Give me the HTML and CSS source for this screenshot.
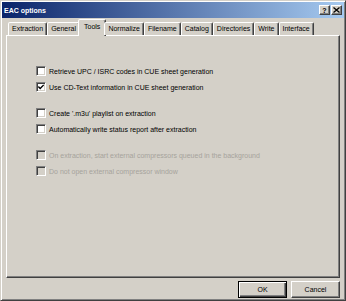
FILE: index.html
```html
<!DOCTYPE html>
<html lang="en">
<head>
    <meta charset="UTF-8">
    <title>EAC options</title>
    <link rel="stylesheet" href="styles.css">
</head>
<body>
  <div class="window">
    <div class="titlebar">
      <span class="title">EAC options</span>
      <div class="caption-buttons">
        <span class="cap-btn">?</span>
        <span class="cap-btn">
          <svg width="7" height="6" viewBox="0 0 7 6"><path d="M0.5 0.5 L6.5 5.5 M6.5 0.5 L0.5 5.5" stroke="#000" stroke-width="1.3"/></svg>
        </span>
      </div>
    </div>

    <div class="tabs">
      <div class="tab">Extraction</div>
      <div class="tab">General</div>
      <div class="tab active">Tools</div>
      <div class="tab">Normalize</div>
      <div class="tab">Filename</div>
      <div class="tab">Catalog</div>
      <div class="tab">Directories</div>
      <div class="tab">Write</div>
      <div class="tab">Interface</div>
    </div>

    <div class="panel">
      <div class="group">
        <label class="check"><span class="box"></span>Retrieve UPC / ISRC codes in CUE sheet generation</label>
        <label class="check"><span class="box checked"><svg width="6" height="6" viewBox="0 0 6 6"><path d="M0.3 2.6 L2.2 4.6 L5.7 0.9" fill="none" stroke="#000" stroke-width="1.4"/></svg></span>Use CD-Text information in CUE sheet generation</label>
      </div>
      <div class="group">
        <label class="check"><span class="box"></span>Create '.m3u' playlist on extraction</label>
        <label class="check"><span class="box"></span>Automatically write status report after extraction</label>
      </div>
      <div class="group">
        <label class="check disabled"><span class="box"></span>On extraction, start external compressors queued in the background</label>
        <label class="check disabled"><span class="box"></span>Do not open external compressor window</label>
      </div>
    </div>

    <div class="footer">
      <button class="btn default">OK</button>
      <button class="btn">Cancel</button>
    </div>
  </div>
</body>
</html>
```

FILE: styles.css
```css
body {
    margin: 0;
    padding: 0;
    font-family: "Liberation Sans", Arial, sans-serif;
    font-size: 7px;
    color: #000;
    background: #d4d0c8;
}
.window {
    box-sizing: border-box;
    width: 346px;
    height: 301px;
    padding: 1px;
    background: #d4d0c8;
    border: 1px solid;
    border-color: #d4d0c8 #404040 #404040 #d4d0c8;
    box-shadow: inset 1px 1px #fff, inset -1px -1px #808080;
    display: flex;
    flex-direction: column;
}
.titlebar {
    height: 16px;
    display: flex;
    align-items: center;
    justify-content: space-between;
    padding: 0 2px 0 2px;
    background: linear-gradient(to right, #0a246a, #a6caf0);
}
.title {
    color: #fff;
    font-weight: bold;
    font-size: 7px;
}
.caption-buttons {
    display: flex;
    gap: 1px;
}
.cap-btn {
    box-sizing: border-box;
    width: 11px;
    height: 10px;
    background: #d4d0c8;
    border: 1px solid;
    border-color: #fff #404040 #404040 #fff;
    box-shadow: inset -1px -1px #808080;
    display: flex;
    align-items: center;
    justify-content: center;
    font-weight: bold;
    font-size: 7px;
    line-height: 1;
}

.tabs {
    display: flex;
    align-items: flex-end;
    height: 16px;
    margin-top: 1px;
    padding-left: 6px;
    position: relative;
    z-index: 1;
}
.tab {
    box-sizing: border-box;
    height: 13px;
    padding: 0 3px;
    line-height: 11px;
    border: 1px solid;
    border-bottom: none;
    border-color: #fff #404040 transparent #fff;
    border-radius: 2px 2px 0 0;
    box-shadow: inset -1px 0 #808080;
    background: #d4d0c8;
    white-space: nowrap;
}
.tab.active {
    height: 17px;
    margin: 0 -2px -1px;
    padding: 1px 5px 0;
    line-height: 12px;
}

.panel {
    box-sizing: border-box;
    height: 243px;
    margin: 0 4px 0 4px;
    padding: 27px 0 0 29px;
    border: 1px solid;
    border-color: #fff #404040 #404040 #fff;
    box-shadow: inset -1px -1px #808080;
    display: flex;
    flex-direction: column;
    gap: 10px;
}
.group {
    display: flex;
    flex-direction: column;
}
.check {
    height: 16px;
    display: flex;
    align-items: center;
    gap: 3px;
    white-space: nowrap;
}
.box {
    box-sizing: border-box;
    width: 10px;
    height: 10px;
    background: #fff;
    border: 1px solid;
    border-color: #808080 #fff #fff #808080;
    box-shadow: inset 1px 1px #404040, inset -1px -1px #d4d0c8;
    display: flex;
    align-items: center;
    justify-content: center;
}
.box svg {
    display: block;
}
.check.disabled {
    color: #a6a39c;
}
.check.disabled .box {
    background: #d4d0c8;
}

.footer {
    display: flex;
    justify-content: flex-end;
    gap: 4px;
    margin-top: 3px;
    padding-right: 4px;
}
.btn {
    box-sizing: border-box;
    width: 49px;
    height: 17px;
    padding: 0;
    font-family: "Liberation Sans", Arial, sans-serif;
    font-size: 7px;
    color: #000;
    background: #d4d0c8;
    border: 1px solid;
    border-color: #fff #404040 #404040 #fff;
    box-shadow: inset -1px -1px #808080;
}
.btn.default {
    border: 1px solid #000;
    box-shadow: inset 1px 1px #fff, inset -1px -1px #404040, inset -2px -2px #808080;
}
```
